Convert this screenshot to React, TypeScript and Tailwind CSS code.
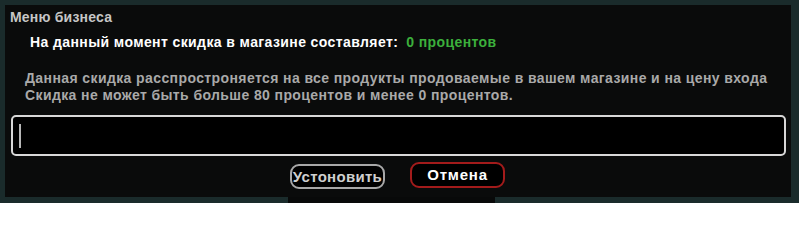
export default function App() {
  return (
    <div className="w-[799px] h-[203px] bg-[#1a2b2b] flex flex-col overflow-hidden font-['Liberation_Sans',Arial,sans-serif]">
      <div className="mt-[5px] ml-[5px] w-[786px] h-[192px] bg-[#0a0b0b] flex flex-col">
        <div className="pl-[5px] pt-[2px] h-[22px] text-[14px] font-bold leading-[20px] text-[#c6c6c6] tracking-[0.2px]">
          Меню бизнеса
        </div>
        <div className="pl-[25px] mt-[5px] flex items-baseline gap-[8px] text-[14px] font-bold leading-[20px] tracking-[0.4px]">
          <span className="text-white">На данный момент скидка в магазине составляет:</span>
          <span className="text-[#3cb03c]">0 процентов</span>
        </div>
        <div className="pl-[20px] mt-[18px] text-[14px] font-bold leading-[17px] text-[#a9a9a9] tracking-[0.4px]">
          <p>Данная скидка расспростроняется на все продукты продоваемые в вашем магазине и на цену входа</p>
          <p>Скидка не может быть больше 80 процентов и менее 0 процентов.</p>
        </div>
        <div className="ml-[6px] mt-[11px] w-[775px] h-[41px] bg-black border-2 border-[#d8d8d8] rounded-[5px] flex items-center px-[6px]">
          <div className="w-[2px] h-[24px] bg-[#b8b8b8]" />
        </div>
        <div className="mt-[8px] flex pl-[285px] gap-[25px]">
          <button className="w-[95px] h-[25px] rounded-[9px] border-2 border-[#a8a8a8] bg-black text-[#cfcfcf] text-[15px] font-bold leading-[20px] flex items-center justify-center whitespace-nowrap tracking-[0.3px] overflow-visible">
            Устоновить
          </button>
          <button className="-mt-[2px] w-[95px] h-[26px] rounded-[9px] border-2 border-[#a31b1b] bg-black text-white text-[15px] font-bold leading-[20px] flex items-center justify-center tracking-[0.8px]">
            Отмена
          </button>
        </div>
      </div>
      <div className="flex-1 flex">
        <div className="ml-[288px] w-[207px] bg-[#080909]" />
      </div>
    </div>
  );
}
